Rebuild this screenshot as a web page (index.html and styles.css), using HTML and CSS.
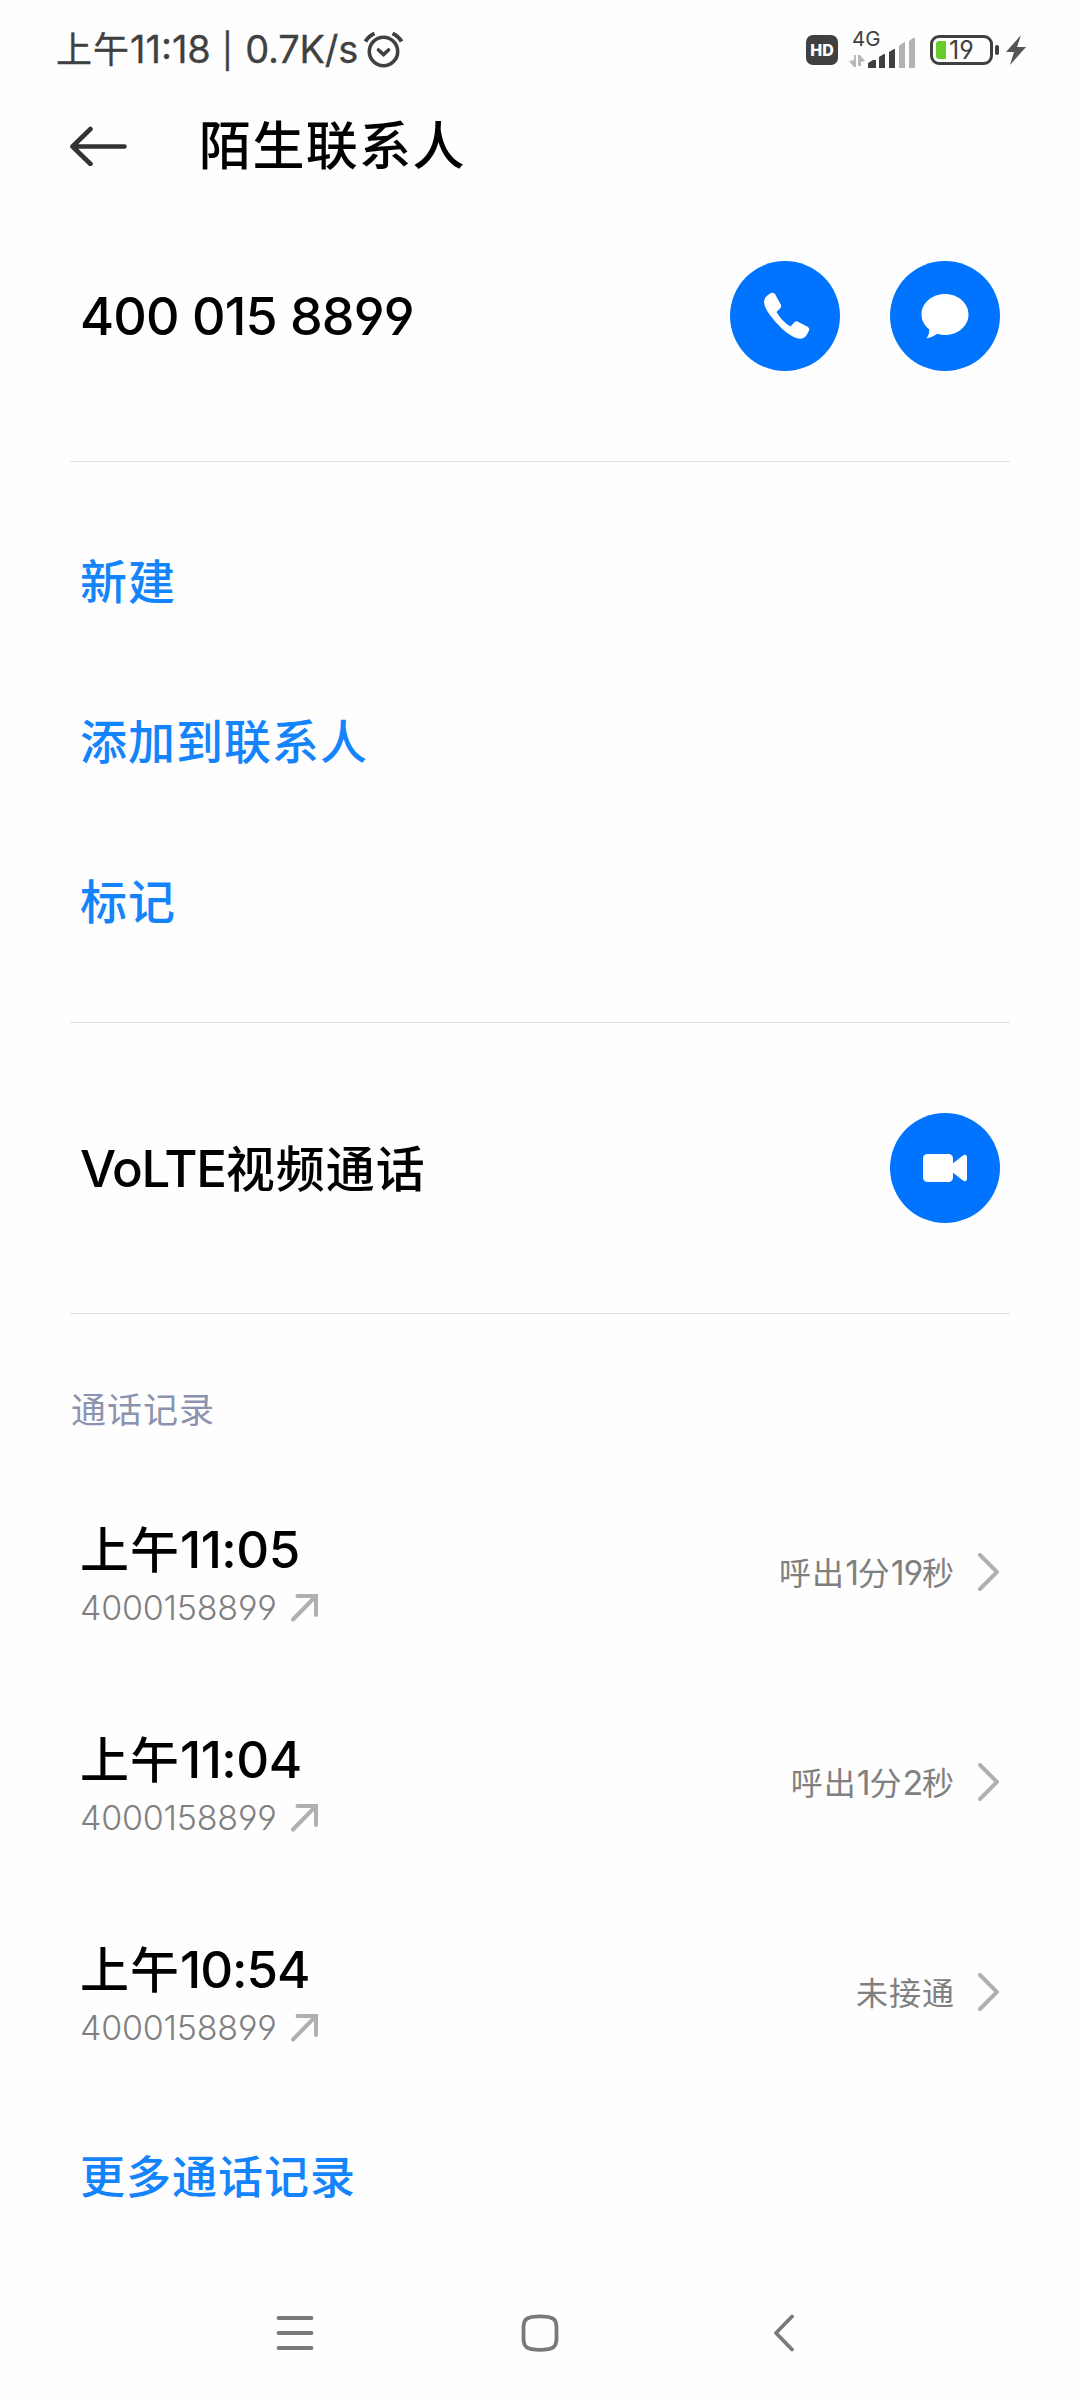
FILE: index.html
```
<!DOCTYPE html>
<html lang="zh-CN">

<head>
    <meta charset="UTF-8">
    <meta name="viewport" content="width=device-width, initial-scale=1.0">
    <title>陌生联系人</title>
    <link rel="stylesheet" href="styles.css">
</head>

<body>

    <div class="status-bar">
        <div class="status-text"><span class="han">上午</span><span class="clock">11:18</span><span class="sep">|</span><span class="speed">0.7K/s</span></div>
        <svg class="alarm" width="40" height="38" viewBox="0 0 40 38" fill="none" stroke="#404040" stroke-width="3.6" stroke-linecap="round">
            <circle cx="19.5" cy="20.5" r="14.2" />
            <path d="M14.5 19l5 4.5 5-4.5" />
            <path d="M1.5 10.5Q4.5 5 10.5 2.5M37.5 10.5Q34.5 5 28.5 2.5" stroke-width="4" stroke-linecap="butt" />
        </svg>
        <div class="status-icons">
            <span class="hd">HD</span>
            <div class="signal">
                <span class="net">4G</span>
                <svg width="68" height="36" viewBox="0 0 68 36">
                    <path d="M0 29l5-1v-5h2v12H5zM9 34V23h2l5 6-4 1v4z" fill="#b8b8b8" />
                    <path d="M19 36v-5l5-3h3v8zM30 36V25l5-3h1v14zM40 36V20l5-3h1v19z" fill="#404040" />
                    <path d="M50 36V14l5-4h1v26zM60 36V9l4-3h2v30z" fill="#b3b3b3" />
                </svg>
            </div>
            <div class="battery"><span class="level"></span>19</div>
            <span class="nub"></span>
            <svg class="bolt" width="20" height="30" viewBox="0 0 20 30">
                <path d="M15 0L0 17h8L4 30l16-18h-9z" fill="#555" />
            </svg>
        </div>
    </div>

    <div class="header">
        <svg width="58" height="40" viewBox="0 0 58 40" fill="none" stroke="#333" stroke-width="4.6" stroke-linecap="round" stroke-linejoin="round">
            <path d="M54.5 20.5H2.5M20.5 3L2.5 20.5l18 17.5" />
        </svg>
        <h1>陌生联系人</h1>
    </div>

    <div class="row contact">
        <span class="phone">400 015 8899</span>
        <div class="buttons">
            <button>
                <svg width="110" height="110" viewBox="0 0 110 110" fill="#fff">
                    <path d="M38 34l3-2q2.5-1 4 1l6 11q.5 1.5-.5 3l-4 4q5 9 14 14.5l4-4.5q1.5-1 3-.5l10.5 5.5q2 1.5 1 3.5l-2 4q-2.5 5-9 4-10-2.500-22-16Q34 48 34 41q.5-5 4-7z" />
                </svg>
            </button>
            <button>
                <svg width="110" height="110" viewBox="0 0 110 110" fill="#fff">
                    <path d="M55 33c13 0 23.5 9 23.5 20.5S68 74 55 74q-4 0-7.5-1.2Q43 76 36.5 77.5q3-4 2.7-9.2C34.5 65 31.5 59 31.5 53.5 31.5 42 42 33 55 33z" />
                </svg>
            </button>
        </div>
    </div>

    <div class="links">
        <a>新建</a>
        <a>添加到联系人</a>
        <a>标记</a>
    </div>

    <div class="row volte">
        <span class="name"><span class="latin">VoLTE</span><span class="han">视频通话</span></span>
        <button>
            <svg width="110" height="110" viewBox="0 0 110 110" fill="#fff">
                <rect x="33" y="41" width="30" height="28" rx="4.5" />
                <path d="M62 51l11-8.5q4-2 4 2v21q0 4-4 2L62 59z" />
            </svg>
        </button>
    </div>

    <div class="label">通话记录</div>

    <div class="records">
        <div class="record">
            <div class="call">
                <div class="time"><span class="han">上午</span>11:05</div>
                <div class="number">4000158899
                    <svg width="28" height="28" viewBox="0 0 28 28"><path d="M2 25.5L23 4M6.5 2H25v19" /></svg>
                </div>
            </div>
            <div class="result"><span>呼出<i>1</i>分<i>19</i>秒</span>
                <svg width="21" height="38" viewBox="0 0 21 38"><path d="M2 2l17 17L2 36" /></svg>
            </div>
        </div>
        <div class="record">
            <div class="call">
                <div class="time"><span class="han">上午</span>11:04</div>
                <div class="number">4000158899
                    <svg width="28" height="28" viewBox="0 0 28 28"><path d="M2 25.5L23 4M6.5 2H25v19" /></svg>
                </div>
            </div>
            <div class="result"><span>呼出<i>1</i>分<i>2</i>秒</span>
                <svg width="21" height="38" viewBox="0 0 21 38"><path d="M2 2l17 17L2 36" /></svg>
            </div>
        </div>
        <div class="record">
            <div class="call">
                <div class="time tight"><span class="han">上午</span>10:54</div>
                <div class="number">4000158899
                    <svg width="28" height="28" viewBox="0 0 28 28"><path d="M2 25.5L23 4M6.5 2H25v19" /></svg>
                </div>
            </div>
            <div class="result"><span>未接通</span>
                <svg width="21" height="38" viewBox="0 0 21 38"><path d="M2 2l17 17L2 36" /></svg>
            </div>
        </div>
    </div>

    <a class="more">更多通话记录</a>

    <div class="nav">
        <svg width="38" height="38" viewBox="0 0 38 38"><path d="M2.5 4h33M2.5 19h33M2.5 34h33" /></svg>
        <svg width="38" height="38" viewBox="0 0 38 38"><path d="M19 2.300c13 0 16.500 2.500 16.500 11.500v10.500c0 9-3.500 11.500-16.500 11.500s-16.500-2.500-16.500-11.500V13.800c0-9 3.500-11.500 16.500-11.500z" /></svg>
        <svg width="20" height="38" viewBox="0 0 20 38"><path d="M18 2.500L2 19l16 16.500" /></svg>
    </div>

</body>

</html>
```
FILE: styles.css
```
* {
    box-sizing: border-box;
}

body {
    margin: 0;
    width: 1080px;
    height: 2400px;
    background-color: #fefefe;
    color: #000;
    font-family: Inter, 'Noto Sans CJK SC', sans-serif;
    font-feature-settings: 'cv03', 'cv04';
}

svg {
    display: block;
    flex: none;
}

.status-bar {
    display: flex;
    align-items: center;
    height: 99px;
    padding: 0 54px 0 56px;
    color: #404040;
}

.status-text {
    font-size: 38px;
    line-height: 50px;
    white-space: nowrap;
    -webkit-text-stroke: 0.3px #404040;
}

.status-text .han {
    font-size: 36px;
    letter-spacing: 1px;
}

.sep {
    margin: 0 12px 0 11px;
    font-size: 34px;
}

.speed {
    letter-spacing: -0.2px;
}

.alarm {
    margin-left: 6px;
}

.status-icons {
    display: flex;
    align-items: center;
    margin-left: auto;
}

.hd {
    width: 32px;
    height: 30px;
    border-radius: 7px;
    background-color: #404040;
    color: #fff;
    font-size: 16px;
    font-weight: 800;
    line-height: 30px;
    text-align: center;
}

.signal {
    position: relative;
    margin: 0 13px 0 11px;
}

.net {
    position: absolute;
    left: 3px;
    top: -4px;
    font-size: 20.5px;
    line-height: 22px;
}

.battery {
    display: flex;
    align-items: center;
    width: 63px;
    height: 30px;
    padding-left: 3px;
    border: 3.5px solid #404040;
    border-radius: 9px;
    font-size: 25px;
    line-height: 24px;
}

.level {
    width: 10px;
    height: 18px;
    margin-right: 3px;
    border-radius: 3px 0 0 3px;
    background-color: #67cb2b;
}

.nub {
    width: 4px;
    height: 10px;
    margin: 0 7px 0 2px;
    border-radius: 2px;
    background-color: #404040;
}

.header {
    display: flex;
    align-items: center;
    height: 92px;
    padding: 2px 70px 0;
}

h1 {
    margin: 1px 0 0 71px;
    font-size: 52px;
    line-height: 60px;
    font-weight: 500;
    letter-spacing: 1.4px;
}

.row {
    display: flex;
    align-items: center;
    justify-content: space-between;
    margin: 0 70px;
    padding: 0 10px;
    border-bottom: 1px solid #e0e0e0;
    font-weight: 500;
}

.contact {
    height: 271px;
    padding-bottom: 20px;
}

.phone {
    font-size: 52px;
    letter-spacing: -0.8px;
}

.buttons {
    display: flex;
    gap: 50px;
}

button {
    width: 110px;
    height: 110px;
    padding: 0;
    border: none;
    border-radius: 50%;
    background-color: #0074ff;
}

.links {
    height: 561px;
    margin: 0 70px;
    padding: 40px 10px 0;
    border-bottom: 1px solid #e0e0e0;
}

a {
    display: block;
    height: 160px;
    color: #1484fc;
    font-size: 47px;
    font-weight: 500;
    letter-spacing: 1px;
    line-height: 160px;
}

.volte {
    height: 291px;
    font-size: 51px;
}

.name {
    padding-bottom: 5px;
}

.latin {
    letter-spacing: -1.3px;
}

.volte .han {
    font-size: 49px;
    letter-spacing: 1px;
}

.label {
    height: 153px;
    padding: 71px 71px 0;
    color: #8c93b0;
    font-size: 35px;
    letter-spacing: 1px;
    line-height: 50px;
}

.record {
    display: flex;
    align-items: center;
    justify-content: space-between;
    height: 210px;
    padding: 0 81px 0 80px;
}

.call {
    padding-top: 10px;
}

.time {
    font-size: 51px;
    line-height: 60px;
    font-weight: 500;
    letter-spacing: -0.5px;
}

.tight {
    letter-spacing: -1px;
}

.time .han {
    font-size: 49px;
    letter-spacing: 1px;
}

.number {
    display: flex;
    align-items: center;
    gap: 14px;
    color: #808080;
    font-size: 34px;
    font-weight: 300;
    letter-spacing: -0.2px;
    line-height: 54px;
}

.number svg,
.result svg {
    fill: none;
    stroke: #b0b0b0;
    stroke-width: 4;
    stroke-linecap: round;
}

.result {
    display: flex;
    align-items: center;
    gap: 23px;
    color: #808080;
    font-size: 32px;
    letter-spacing: 1px;
}

.result span {
    padding-bottom: 3px;
}

.result i {
    font-size: 34px;
    font-style: normal;
    letter-spacing: -1.2px;
}

.more {
    padding-left: 80px;
    font-size: 45px;
    line-height: 162px;
}

.nav {
    display: flex;
    align-items: center;
    height: 143px;
    padding: 8px 0 0 276px;
}

.nav svg {
    margin-right: 207px;
    fill: none;
    stroke: #7a7a7a;
    stroke-width: 3.8;
    stroke-linecap: round;
    stroke-linejoin: round;
}

.nav svg:last-child {
    margin-left: 8px;
}
```
